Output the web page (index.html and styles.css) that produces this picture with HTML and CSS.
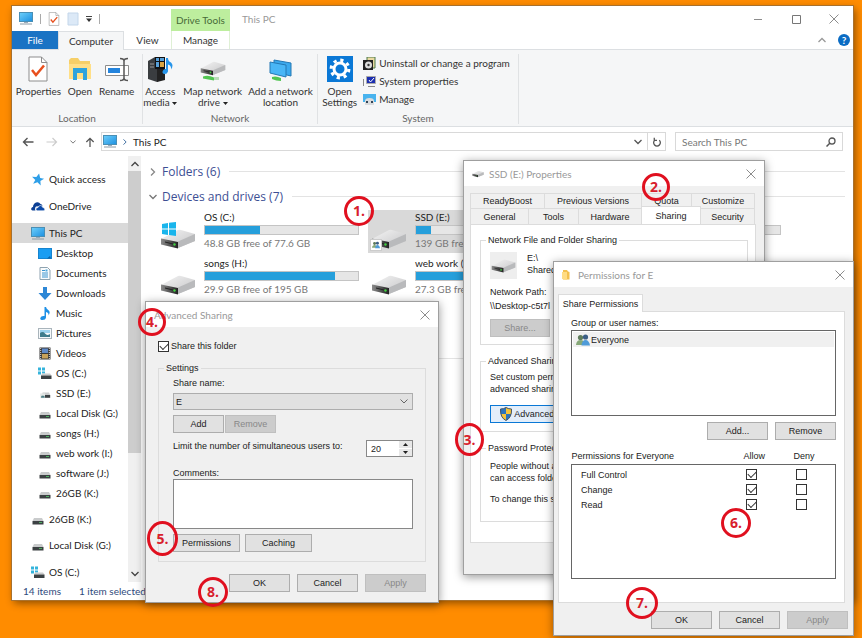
FILE: index.html
```html
<!DOCTYPE html>
<html lang="en">
<head>
<meta charset="utf-8">
<title>This PC</title>
<link rel="stylesheet" href="styles.css">
</head>
<body>
<svg class="defs" aria-hidden="true">
  <defs>
    <linearGradient id="screen" x1="0" y1="0" x2="1" y2="1"><stop offset="0" stop-color="#6fd0fb"/><stop offset="1" stop-color="#1c8fe0"/></linearGradient>
    <linearGradient id="metal" x1="0" y1="0" x2="1" y2="1"><stop offset="0" stop-color="#f4f4f4"/><stop offset="1" stop-color="#c4c4c6"/></linearGradient>
    <linearGradient id="front" x1="0" y1="0" x2="1" y2="0"><stop offset="0" stop-color="#8b8b8b"/><stop offset="1" stop-color="#222"/></linearGradient>
  </defs>
  <symbol id="pc" viewBox="0 0 14 13"><rect x=".5" y=".5" width="13" height="9" fill="url(#screen)" stroke="#4a8fb5"/><path d="M5 10h4v1H5z" fill="#9ab"/><path d="M1 12h12" stroke="#8a9aa5"/></symbol>
  <symbol id="drive" viewBox="0 0 36 20"><path d="M1 10 18 1q1-.5 3 0l14 4v7L18 19 1 15z" fill="url(#metal)"/><path d="M18 12.500 35 5v7L18 19z" fill="#b9babc"/><path d="M1 9.500 18 13v6.500L1 15.500z" fill="url(#front)"/><path d="M5 13l8 2" stroke="#222" stroke-width="1"/><circle cx="14.500" cy="15.500" r="1.200" fill="#3fd03f"/></symbol>
  <symbol id="mini-drive" viewBox="0 0 12 8"><path d="M2 1h8l1.500 3H.5z" fill="#c9cbcc"/><path d="M.5 4h11v3.500H.5z" fill="#3c4143"/><path d="M7 5.500h3" stroke="#4fae62"/></symbol>
  <symbol id="win" viewBox="0 0 14 14"><path d="M0 2 6 1v5.500H0zM7 .8 14 0v6.500H7zM0 7.500h6V13l-6-1zM7 7.500h7V14l-7-1z" fill="#19b5ec"/></symbol>
  <symbol id="os-drive" viewBox="0 0 14 12"><path d="M0 0h3v3H0zM4 0h3v3H4zM0 4h3v3H0zM4 4h3v2H4z" fill="#35b4dc"/><path d="M4 6h8l1.500 2H3z" fill="#c9cbcc"/><path d="M3 8h10.500v3.500H3z" fill="#3c4143"/></symbol>
  <symbol id="share-drive" viewBox="0 0 14 10"><path d="M4 2h8l1.500 3H3z" fill="#c9cbcc"/><path d="M3 5h10.500v3.500H3z" fill="#3c4143"/><rect x="1" y="3" width="6" height="6" fill="#e4e8e6"/><path d="M2 8.500q0-3 1.500-3t1.500 3zM4.500 8.500q0-3 1-3t1.200 3z" fill="#4d7f86"/></symbol>
  <symbol id="star" viewBox="0 0 12 12"><path d="m7 .5 1 4 3.600.8-3.400 2L8.500 11.500 5.500 8.500 1.500 10l2-3.500-3-3 4 .3z" fill="#2f9fe8"/></symbol>
  <symbol id="cloud" viewBox="0 0 14 9"><path d="M1.500 8.500Q-.5 8 .5 6q.5-1 1.500-1 0-3 3-4.500Q8-.5 9.500 2q1.500 0 2 2L5 4.500Q3.500 6 4.500 8.500z" fill="#0c3f94"/><path d="M6 8.800Q4.500 8.500 5 6.800 5.500 5.500 7 5.500 7.500 3.500 9.500 3.500t2.300 2q2 .2 2 1.800t-1.600 1.500z" fill="#0c4aa8" stroke="#fff" stroke-width=".6"/></symbol>
  <symbol id="desk" viewBox="0 0 14 11"><rect x=".5" y=".5" width="13" height="10" fill="#1a9df2" stroke="#1684cf"/><path d="M12 8 9 10.500h4z" fill="#0b63a8"/></symbol>
  <symbol id="doc" viewBox="0 0 12 13"><path d="M1 .5h7.500L11 3v9.500H1z" fill="#fafcfd" stroke="#8fa3b0"/><path d="M3 3.500h3M3 6h6M3 8h6M3 10h6" stroke="#3a94cf"/><path d="M6.500 2.500h2v2h-2z" fill="#4aa7dd"/></symbol>
  <symbol id="down" viewBox="0 0 13 13"><path d="M4.500 0h4v6H13l-6.500 7L0 6h4.500z" fill="#2d87d6"/></symbol>
  <symbol id="note" viewBox="0 0 11 13"><path d="M5 0h1.500q.3 2 2.500 3.300Q11.300 5 9 8.500q.5-3-2.500-3.500v5.500Q6 13 3 13 .5 13 .8 11 1.500 8.500 5 9z" fill="#1e90e6"/></symbol>
  <symbol id="pic" viewBox="0 0 14 11"><rect x=".5" y=".5" width="13" height="10" fill="#f5f8fa" stroke="#a9b4bb"/><path d="M2 2h10v3H2z" fill="#9bd2ee"/><path d="M2 5q3-2 5 .5T12 6v3H2z" fill="#3f7c8c"/></symbol>
  <symbol id="film" viewBox="0 0 12 13"><path d="M.5.500h11v12H.500z" fill="#383838"/><path d="M3 1.500h6v4.500H3z" fill="#5d89c8"/><path d="M3 7h6v4.500H3z" fill="#c6a15a"/><path d="M1.700 1v11M10.300 1v11" stroke="#ddd" stroke-width="1" stroke-dasharray="1 1"/></symbol>
  <symbol id="sheet-check" viewBox="0 0 20 26"><path d="M1 1h12.500L19 6.500V25H1z" fill="#fff" stroke="#8d8d8d"/><path d="M13.500 1v5.500H19" fill="none" stroke="#8d8d8d"/><path d="m4 14 4 5 8-9.500" fill="none" stroke="#e8501e" stroke-width="2.500"/></symbol>
  <symbol id="close" viewBox="0 0 10 10"><path d="m.5.500 9 9m0-9-9 9" fill="none" stroke="#8c8c8c"/></symbol>
  <symbol id="chev" viewBox="0 0 8 5"><path d="m.5.500 3.500 3.500L7.500.5" fill="none" stroke="currentColor" stroke-width="1.300"/></symbol>
  <symbol id="caret" viewBox="0 0 5 3"><path d="M0 0h5L2.500 3z" fill="#222"/></symbol>
  <symbol id="folder" viewBox="0 0 8 11"><path d="M1 1h4l1 1.500L7.500 3v7.500H1z" fill="#f3c04f"/><path d="M0 3h5v8l-5-1z" fill="#ffdc84"/></symbol>
  <symbol id="people" viewBox="0 0 14 12"><circle cx="4.500" cy="3.500" r="2.600" fill="#5f7c5b"/><path d="M0 11q.5-5 4.500-5T9 11z" fill="#86a878"/><circle cx="9.500" cy="3" r="2.600" fill="#3c5e85"/><path d="M5.500 11.500q.5-5.500 4-5.500T14 11.500z" fill="#4f9bd8"/></symbol>
</svg>

<main class="desktop">

  <section class="window explorer" aria-label="This PC">
    <header class="titlebar">
      <div class="quick">
        <svg class="i14"><use href="#pc"/></svg><span class="bar"></span>
        <svg class="i12"><use href="#sheet-check"/></svg>
        <svg class="i12" viewBox="0 0 12 14"><path d="M1 1h10v12H1z" fill="#dce9f7" stroke="#c3d6ea"/></svg>
        <svg class="i6" viewBox="0 0 6 6"><path d="M0 .5h6" stroke="#444"/><path d="M0 2.500h6L3 6z" fill="#333"/></svg><span class="bar"></span>
      </div>
      <span class="drive-tools">Drive Tools</span>
      <h1>This PC</h1>
      <div class="controls">
        <button aria-label="Minimize"><svg class="i10" viewBox="0 0 10 10"><path d="M1 5.500h8" stroke="#8c8c8c"/></svg></button>
        <button aria-label="Maximize"><svg class="i10" viewBox="0 0 10 10"><path d="M1.500 1.500h8v8h-8z" fill="none" stroke="#777"/></svg></button>
        <button aria-label="Close"><svg class="i10"><use href="#close"/></svg></button>
      </div>
    </header>
    <nav class="tabs">
      <button class="file">File</button>
      <button class="current">Computer</button>
      <button class="view">View</button>
      <button class="manage">Manage</button>
      <span class="help">
        <svg class="i8 up" color="#999"><use href="#chev"/></svg>
        <button aria-label="Help">?</button>
      </span>
    </nav>

    <div class="ribbon">
      <section class="group location">
        <div class="tools">
          <button><svg class="big" viewBox="-3 0 26 26"><use href="#sheet-check" width="20" height="26"/></svg>Properties</button>
          <button><svg class="big" viewBox="0 0 26 26"><path d="M2 4 4 2h7l2 3h10v18H2z" fill="#f6cf68"/><path d="M2 8h22v15H2z" fill="#ffdf87"/><path d="M6 24V12h14v12h-4v-7h-6v7z" fill="#2da3de"/></svg>Open</button>
          <button><svg class="big" viewBox="0 0 26 26"><path d="M1.500 9.500h23v10h-23z" fill="#fff" stroke="#8c8c8c"/><path d="M4 12h12v5H4z" fill="#2484dd"/><path d="M16 2.500q4 0 4 2.500v17q0 2.500-4 2.500M24 2.500q-4 0-4 2.500m4 19.500q-4 0-4-2.500" fill="none" stroke="#555" stroke-width="1.500"/></svg>Rename</button>
        </div>
        <h2>Location</h2>
      </section>
      <section class="group network">
        <div class="tools">
          <button><svg class="big" viewBox="0 0 26 26"><path d="M1 5 8 1h9v21l-7 4-9-3z" fill="#3a3d40"/><path d="M10 5h8v19l-8 2z" fill="#222"/><path d="M8 1h10v12H8z" fill="#111"/><path d="M9 2h3v3H9zM13 2h4v3h-4zM9 6h3v5H9z" fill="#58a0d8"/><path d="M13 6h4v5h-4z" fill="#d9a441"/><path d="M3 8h4m-4 3h4" stroke="#999"/><path d="M19 2h2q0 3 3 4.500 3 2.500 0 7 .5-4-3-5v7q-1 3-4 2.500-2.500-1-1-3.500Q17 12.500 19 13z" fill="#2795ea"/></svg>Access<br>media <svg class="caret"><use href="#caret"/></svg></button>
          <button><svg class="big" viewBox="0 0 26 26"><use href="#drive" y="5" width="26" height="15"/><path d="M3 20.500q5-2 11 1v3q-6-1-11-2z" fill="#52c552"/><path d="M14 21h5v3h-5z" fill="#b8dcb8"/></svg>Map network<br>drive <svg class="caret"><use href="#caret"/></svg></button>
          <button><svg class="big" viewBox="0 0 26 26"><path d="m7 4 17 3v13L7 16z" fill="#3ba9ee" stroke="#2478b4"/><path d="m3 6 16 3v12L3 17z" fill="#49b6f6" stroke="#2478b4"/><path d="M5 21q4-1.500 9 1v3q-5 0-9-2z" fill="#52c552"/></svg>Add a network<br>location</button>
        </div>
        <h2>Network</h2>
      </section>
      <section class="group system">
        <div class="tools">
          <button><svg class="big" viewBox="0 0 26 26"><path d="M0 0h26v26H0z" fill="#0a78d6"/><circle cx="13" cy="13" r="6" fill="none" stroke="#fff" stroke-width="3"/><circle cx="13" cy="13" r="8.800" fill="none" stroke="#fff" stroke-width="3.200" stroke-dasharray="3.200 3.710"/></svg>Open<br>Settings</button>
          <ul class="small-tools">
            <li><button><svg class="i13" viewBox="0 0 13 13"><path d="M4 0h8v11H4z" fill="#e9d9a0" stroke="#4c7a4c"/><path d="M0 3h10v10H0z" fill="#222"/><circle cx="5.500" cy="8" r="3.500" fill="#ddd"/><circle cx="5.500" cy="8" r="1.200" fill="#333"/></svg>Uninstall or change a program</button></li>
            <li><button><svg class="i13" viewBox="0 0 13 13"><path d="M3.500 1.500h9v7h-9z" fill="#1c2fb0" stroke="#aaa"/><path d="m6 5 1.500 2L11 3" fill="none" stroke="#fff"/><path d="M.5 4v7M5 11.500h7" stroke="#888"/></svg>System properties</button></li>
            <li><button><svg class="i13" viewBox="0 0 13 13"><path d="M0 1h13v8H0z" fill="#49b3ee"/><path d="M2 8q0-3 4.500-3T11 8v4H2z" fill="#d9dcde"/><path d="M3 8h2v2H3zM8 8h2v2H8z" fill="#345"/></svg>Manage</button></li>
          </ul>
        </div>
        <h2>System</h2>
      </section>
    </div>

    <div class="address-row">
      <button aria-label="Back"><svg class="i12" viewBox="0 0 12 10"><path d="M11.500 5H1.500M5.500 1l-4 4 4 4" fill="none" stroke="#555" stroke-width="1.400"/></svg></button>
      <button aria-label="Forward"><svg class="i12" viewBox="0 0 12 10"><path d="M.5 5h10M6.500 1l4 4-4 4" fill="none" stroke="#ccc" stroke-width="1.200"/></svg></button>
      <button aria-label="Recent" class="recent"><svg class="i6" color="#777"><use href="#chev"/></svg></button>
      <button aria-label="Up"><svg class="i10" viewBox="0 0 10 11"><path d="M5 11V1.500M1 5.500l4-4 4 4" fill="none" stroke="#555" stroke-width="1.400"/></svg></button>
      <div class="path">
        <svg class="i14"><use href="#pc"/></svg>
        <svg class="i6 right" color="#3f6fa0"><use href="#chev"/></svg>
        <span>This PC</span>
        <button class="drop" aria-label="Previous locations"><svg class="i8" color="#555"><use href="#chev"/></svg></button>
        <button class="refresh" aria-label="Refresh"><svg class="i10" viewBox="0 0 10 11"><path d="M2.500 3.500a3.700 3.700 0 1 0 5 0M2 .8v3h3" fill="none" stroke="#555" stroke-width="1.400"/></svg></button>
      </div>
      <label class="search"><input type="text" placeholder="Search This PC" aria-label="Search This PC"><svg class="i10" viewBox="0 0 10 10"><circle cx="6" cy="4" r="3" fill="none" stroke="#555" stroke-width="1.300"/><path d="M4 6 .5 9.500" stroke="#555" stroke-width="1.500"/></svg></label>
    </div>

    <div class="content">
      <nav class="tree">
        <a href="#"><svg><use href="#star"/></svg>Quick access</a>
        <a href="#"><svg><use href="#cloud"/></svg>OneDrive</a>
        <a href="#" class="picked"><svg><use href="#pc"/></svg>This PC</a>
        <a href="#" class="child"><svg><use href="#desk"/></svg>Desktop</a>
        <a href="#" class="child"><svg><use href="#doc"/></svg>Documents</a>
        <a href="#" class="child"><svg><use href="#down"/></svg>Downloads</a>
        <a href="#" class="child"><svg><use href="#note"/></svg>Music</a>
        <a href="#" class="child"><svg><use href="#pic"/></svg>Pictures</a>
        <a href="#" class="child"><svg><use href="#film"/></svg>Videos</a>
        <a href="#" class="child"><svg><use href="#os-drive"/></svg>OS (C:)</a>
        <a href="#" class="child disk"><svg><use href="#share-drive"/></svg>SSD (E:)</a>
        <a href="#" class="child disk"><svg><use href="#mini-drive"/></svg>Local Disk (G:)</a>
        <a href="#" class="child disk"><svg><use href="#mini-drive"/></svg>songs (H:)</a>
        <a href="#" class="child disk"><svg><use href="#mini-drive"/></svg>web work (I:)</a>
        <a href="#" class="child disk"><svg><use href="#mini-drive"/></svg>software (J:)</a>
        <a href="#" class="child disk"><svg><use href="#mini-drive"/></svg>26GB (K:)</a>
        <a href="#" class="disk"><svg><use href="#mini-drive"/></svg>26GB (K:)</a>
        <a href="#" class="disk"><svg><use href="#mini-drive"/></svg>Local Disk (G:)</a>
        <a href="#"><svg><use href="#os-drive"/></svg>OS (C:)</a>
      </nav>
      <div class="scroll">
        <svg class="i8 up"><use href="#chev"/></svg>
        <span class="thumb"></span>
        <svg class="i8"><use href="#chev"/></svg>
      </div>
      <div class="files">
        <h2><svg class="i8 right" color="#888"><use href="#chev"/></svg>Folders (6)</h2>
        <h2><svg class="i8" color="#777"><use href="#chev"/></svg>Devices and drives (7)</h2>
        <div class="drives">
          <article><div class="pic os"><svg class="flag"><use href="#win"/></svg><svg class="hd"><use href="#drive"/></svg></div><div class="info"><b>OS (C:)</b><i class="meter"><u style="width:36%"></u></i><small>48.8 GB free of 77.6 GB</small></div></article>
          <article class="picked"><div class="pic shared"><svg class="hd"><use href="#drive"/></svg><span class="tag"><svg><use href="#people"/></svg></span></div><div class="info"><b>SSD (E:)</b><i class="meter"><u style="width:10%"></u></i><small>139 GB free</small></div></article>
          <article><div class="pic"><svg class="hd"><use href="#drive"/></svg></div><div class="info"><b>Local Disk</b><i class="meter"><u style="width:40%"></u></i><small>&nbsp;</small></div></article>
          <article><div class="pic"><svg class="hd"><use href="#drive"/></svg></div><div class="info"><b>songs (H:)</b><i class="meter"><u style="width:85%"></u></i><small>29.9 GB free of 195 GB</small></div></article>
          <article><div class="pic"><svg class="hd"><use href="#drive"/></svg></div><div class="info"><b>web work (I:)</b><i class="meter"><u style="width:85%"></u></i><small>27.3 GB free</small></div></article>
        </div>
        <hr>
      </div>
    </div>
    <footer><span>14 items</span><span>1 item selected</span></footer>
  </section>

  <section class="window dialog properties" aria-label="SSD (E:) Properties">
    <header><svg class="prop-icon"><use href="#drive"/></svg><h1>SSD (E:) Properties</h1><button aria-label="Close"><svg class="i10"><use href="#close"/></svg></button></header>
    <div class="body">
      <div class="tab-row back"><button class="w75">ReadyBoost</button><button class="w97">Previous Versions</button><button class="w50">Quota</button><button class="w63">Customize</button></div>
      <div class="tab-row front"><button class="w59">General</button><button class="w50">Tools</button><button class="w63">Hardware</button><button class="w59 on">Sharing</button><button class="w54">Security</button></div>
      <div class="panel">
        <fieldset class="f1">
          <legend>Network File and Folder Sharing</legend>
          <div class="shared-item"><span><svg><use href="#drive"/></svg></span><p>E:\<br>Shared</p></div>
          <p class="net">Network Path:<br>\\Desktop-c5t7l</p>
          <button class="btn" disabled>Share...</button>
        </fieldset>
        <fieldset class="f2">
          <legend>Advanced Sharing</legend>
          <p>Set custom permissions,<br>advanced sharing</p>
          <button class="btn focus"><svg class="i12" viewBox="0 0 12 13"><path d="M6 0Q3.500 1.500.5 1.500 0 10 6 13q6-3 5.500-11.500Q8.500 1.500 6 0z" fill="#2c74bd"/><path d="M6 0q2.500 1.500 5.500 1.500.3 2.500-.4 5H6zM.9 6.500H6V13Q2 11 .9 6.500z" fill="#f5c43a"/><path d="M6 0Q3.500 1.500.5 1.500 0 10 6 13q6-3 5.500-11.500Q8.500 1.500 6 0z" fill="none" stroke="#456"/></svg>Advanced Sharing</button>
        </fieldset>
        <fieldset class="f3">
          <legend>Password Protection</legend>
          <p>People without a<br>can access folders</p>
          <p>To change this setting</p>
        </fieldset>
      </div>
    </div>
  </section>

  <section class="window dialog advanced" aria-label="Advanced Sharing">
    <header><h1>Advanced Sharing</h1><button aria-label="Close"><svg class="i10"><use href="#close"/></svg></button></header>
    <div class="body">
      <label class="tick"><input type="checkbox" checked>Share this folder</label>
      <fieldset>
        <legend>Settings</legend>
        <label for="share">Share name:</label>
        <select id="share"><option>E</option></select>
        <div class="pair"><button class="btn">Add</button><button class="btn" disabled>Remove</button></div>
        <div class="limit"><label for="users">Limit the number of simultaneous users to:</label>
          <span class="spin"><input id="users" type="text" value="20"><span><button aria-label="More"><svg class="caret up"><use href="#caret"/></svg></button><button aria-label="Fewer"><svg class="caret"><use href="#caret"/></svg></button></span></span></div>
        <label for="comments">Comments:</label>
        <textarea id="comments"></textarea>
        <div class="pair wide"><button class="btn">Permissions</button><button class="btn">Caching</button></div>
      </fieldset>
      <div class="actions"><button class="btn">OK</button><button class="btn">Cancel</button><button class="btn" disabled>Apply</button></div>
    </div>
  </section>

  <section class="window dialog permissions" aria-label="Permissions for E">
    <header><svg class="folder-icon"><use href="#folder"/></svg><h1>Permissions for E</h1><button aria-label="Close"><svg class="i10"><use href="#close"/></svg></button></header>
    <div class="body">
      <div class="tab-row"><button class="on">Share Permissions</button></div>
      <div class="panel">
        <p>Group or user names:</p>
        <ul class="names"><li><svg><use href="#people"/></svg>Everyone</li></ul>
        <div class="actions"><button class="btn">Add...</button><button class="btn">Remove</button></div>
        <table>
          <thead><tr><th>Permissions for Everyone</th><th>Allow</th><th>Deny</th></tr></thead>
          <tbody>
            <tr><td>Full Control</td><td><input type="checkbox" aria-label="Allow Full Control" checked></td><td><input type="checkbox" aria-label="Deny Full Control"></td></tr>
            <tr><td>Change</td><td><input type="checkbox" aria-label="Allow Change" checked></td><td><input type="checkbox" aria-label="Deny Change"></td></tr>
            <tr><td>Read</td><td><input type="checkbox" aria-label="Allow Read" checked></td><td><input type="checkbox" aria-label="Deny Read"></td></tr>
            <tr class="rest"><td colspan="3"></td></tr>
          </tbody>
        </table>
      </div>
      <div class="actions"><button class="btn">OK</button><button class="btn">Cancel</button><button class="btn" disabled>Apply</button></div>
    </div>
  </section>

  <span class="step s1">1.</span>
  <span class="step s2">2.</span>
  <span class="step s3">3.</span>
  <span class="step s4">4.</span>
  <span class="step s5">5.</span>
  <span class="step s6">6.</span>
  <span class="step s7">7.</span>
  <span class="step s8">8.</span>
</main>
</body>
</html>
```
FILE: styles.css
```css
:root {
  --ui: Lato, "Open Sans", sans-serif;
  --heading: "Open Sans", "Noto Sans", sans-serif;
  --classic: "Liberation Sans", Arial, sans-serif;
}
* { box-sizing: border-box; }
body { margin: 0; font: 10px/12px var(--ui); color: #333; }
h1, h2, p, ul { margin: 0; padding: 0; font-size: inherit; font-weight: inherit; }
ul { list-style: none; }
button, input, select, textarea { font: inherit; color: inherit; margin: 0; }
button { padding: 0; border: 0; background: none; white-space: nowrap; }
svg { display: block; flex: none; }
.defs { position: absolute; width: 0; height: 0; }
.i6 { width: 6px; height: 6px; }
.i8 { width: 8px; height: 6px; }
.i10 { width: 10px; height: 10px; }
.i12 { width: 12px; height: 14px; }
.i13 { width: 13px; height: 13px; }
.i14 { width: 14px; height: 13px; }
.caret { display: inline-block; width: 5px; height: 3px; vertical-align: middle; }
.up { transform: rotate(180deg); }
.right { transform: rotate(-90deg); }

.desktop { position: relative; min-height: 100vh; overflow: hidden; background: #ff8c00; }
.window { position: absolute; display: flex; flex-direction: column; background: #fff; }
.explorer { inset: 6px 9px 38px 12px; box-shadow: 0 0 0 1px #a8712e, 2px 3px 8px #0007; }

/* Explorer title bar and tabs */
.titlebar { display: flex; height: 25px; flex: none; align-items: center; color: #999; }
.quick { display: flex; width: 159px; align-items: center; gap: 7px; padding-left: 7px; }
.bar { width: 1px; height: 10px; background: #aaa; }
.drive-tools { width: 59px; align-self: stretch; margin-top: 3px; background: #bdee9e; color: #476b38; line-height: 22px; text-align: center; }
.titlebar h1 { margin-left: 12px; }
.controls { display: flex; gap: 28px; margin-left: auto; padding-right: 14px; }
.tabs { display: flex; height: 19px; flex: none; align-items: stretch; border-bottom: 1px solid #dcdfe2; }
.file { width: 46px; background: #1a73c4; color: #fff; }
.current { width: 66px; margin-bottom: -1px; background: #f5f6f7; border: 1px solid #dcdfe2; border-bottom: 0; }
.view { width: 47px; }
.manage { width: 59px; border: solid #dff0d5; border-width: 0 1px; }
.help { display: flex; align-items: center; gap: 12px; margin-left: auto; padding-right: 3px; }
.help button { width: 12px; height: 12px; border-radius: 50%; background: #0b6cc4; color: #fff; font-weight: 700; line-height: 12px; }

/* Ribbon */
.ribbon { display: flex; height: 77px; flex: none; padding: 4px 0 2px; background: #f5f6f7; border-bottom: 1px solid #dcdfe2; line-height: 11px; }
.group { display: flex; flex-direction: column; justify-content: space-between; border-right: 1px solid #e0e2e4; }
.group h2 { text-align: center; color: #666; }
.location { width: 131px; }
.network { width: 175px; }
.system { width: 201px; }
.tools { display: flex; justify-content: center; align-items: flex-start; gap: 6px; padding-right: 4px; }
.tools > button { display: block; }
.big { width: 26px; height: 26px; margin: 2px auto 4px; }
.small-tools { display: flex; flex-direction: column; gap: 5px; padding-top: 3px; }
.small-tools button { display: flex; align-items: center; gap: 3px; }

/* Address row */
.address-row { display: flex; height: 29px; flex: none; align-items: center; gap: 12px; padding: 0 10px; }
.address-row .recent { margin-right: -3px; }
.path { display: flex; flex: 1; height: 19px; align-items: center; gap: 5px; margin-left: -6px; padding-left: 1px; border: 1px solid #d9d9d9; color: #222; }
.path .drop { margin-left: auto; }
.refresh { display: grid; width: 18px; align-self: stretch; place-items: center; border-left: 1px solid #d9d9d9; }
.search { display: flex; width: 168px; height: 19px; align-items: center; margin-left: -3px; padding: 0 6px; border: 1px solid #d9d9d9; }
.search input { flex: 1; min-width: 0; border: 0; padding: 0; outline: 0; }
.search input::placeholder { color: #777; }

/* Explorer content */
.content { display: flex; flex: 1; min-height: 0; }
.tree { width: 116px; padding-top: 6px; overflow: hidden; }
.tree a { display: flex; height: 20px; align-items: center; gap: 4px; margin-top: 7px; padding-left: 19px; color: #222; text-decoration: none; white-space: nowrap; }
.tree a.disk { margin-top: 6px; }
.tree a.child { margin-top: 0; padding-left: 26px; }
.tree svg { width: 14px; height: 13px; }
.tree .disk svg { height: 8px; margin-top: 4px; }
.tree .picked { background: #d9d9d9; }
.scroll { display: flex; width: 13px; flex-direction: column; align-items: center; justify-content: space-between; padding: 5px 0; background: #f0f0f0; color: #444; }
.thumb { width: 13px; flex: 0 1 282px; margin: 4px 0 auto; background: #cdcdcd; }
.files { flex: 1; min-width: 0; padding: 3px 8px; }
.files h2 { display: flex; height: 25px; align-items: center; gap: 5px; font-family: var(--heading); font-size: 12px; color: #3d4f94; white-space: nowrap; }
.files h2::after { content: ""; flex: 1; height: 1px; margin-left: 4px; background: #e3e3e3; }
.drives { display: grid; grid-template-columns: repeat(3, 202px); gap: 3px 9px; margin-left: 8px; padding: 1px 0 59px; }
.drives article { display: flex; height: 43px; gap: 9px; }
.drives .picked { background: #d9d9d9; }
.pic { position: relative; display: flex; width: 38px; align-items: flex-end; padding: 0 0 4px 3px; }
.hd { width: 36px; height: 20px; }
.flag { position: absolute; left: 5px; top: 12px; width: 14px; height: 14px; }
.tag { position: absolute; left: 2px; bottom: 2px; padding: 1px; background: #fff; border: 1px solid #ccc; }
.tag svg { width: 8px; height: 8px; }
.info { display: flex; flex: 1; flex-direction: column; color: #222; white-space: nowrap; }
.info b { font-weight: 400; line-height: 15px; }
.info small { font-size: inherit; line-height: 16px; color: #777; }
.meter { display: block; height: 10px; background: #e6e6e6; border: 1px solid #c4c4c4; }
.meter u { display: block; height: 100%; background: #269fdb; }
.files hr { height: 1px; margin: 0; border: 0; background: #e3e3e3; }
.explorer footer { display: flex; height: 18px; flex: none; align-items: center; gap: 18px; padding-left: 11px; color: #2e4a7c; white-space: nowrap; }

/* Dialogs */
.dialog { border: 1px solid #9f9f9f; background: #f0f0f0; box-shadow: 0 2px 9px #0006; color: #222; }
.dialog header { display: flex; height: 25px; align-items: center; gap: 5px; padding: 0 8px; background: #fff; color: #999; }
.dialog header button { margin-left: auto; }
.dialog .body { font-family: var(--classic); font-size: 9px; }
.dialog fieldset { margin: 0; min-width: 0; border: 1px solid #dcdcdc; }
.dialog legend { padding: 0 2px; }
.btn { height: 18px; background: #e1e1e1; border: 1px solid #adadad; }
.btn:disabled { background: #ccc; border-color: #bfbfbf; color: #888; }
.actions { display: flex; justify-content: flex-end; gap: 7px; }
.actions .btn { width: 61px; }
input[type="checkbox"] { appearance: none; display: grid; width: 11px; height: 11px; margin: 0; border: 1px solid #333; background: #fff; }
input[type="checkbox"]:checked::after { content: ""; width: 7px; height: 4px; margin: 1px; border: solid #333; border-width: 0 0 1px 1px; transform: rotate(-45deg); }
.tab-row { display: flex; }
.tab-row button { height: 16px; background: #f0f0f0; border: 1px solid #dcdcdc; border-width: 1px 1px 0 0; }
.tab-row button:first-child { border-left-width: 1px; }
.tab-row .on { position: relative; height: 18px; margin: -2px 0 -1px; background: #fff; }
.panel { background: #fff; border: 1px solid #dcdcdc; }

.properties { left: 463px; top: 160px; width: 302px; }
.properties .body { padding: 7px 8px 31px 6px; }
.prop-icon { width: 12px; height: 8px; }
.back button { height: 15px; }
.w50 { width: 50px; } .w54 { width: 54px; } .w59 { width: 59px; }
.w63 { width: 63px; } .w75 { width: 75px; } .w97 { width: 97px; }
.properties .panel { display: flex; flex-direction: column; gap: 10px; padding: 9px 7px 20px 9px; }
.properties fieldset { padding: 0 9px; white-space: nowrap; overflow: hidden; }
.properties legend { margin-left: -4px; }
.f1 { height: 111px; }
.f2 { height: 77px; }
.f3 { height: 80px; }
.shared-item { display: flex; gap: 10px; padding-top: 6px; }
.shared-item span { display: grid; width: 27px; height: 27px; place-items: center; background: #eee; }
.shared-item svg { width: 25px; height: 16px; }
.net { padding: 6px 0; line-height: 14px; }
.properties .btn { width: 60px; }
.f2 p { padding: 4px 0 10px; }
.properties .focus { display: flex; width: 108px; align-items: center; justify-content: center; gap: 2px; border-color: #0a78d6; background: #e3eefa; }
.f3 p { padding: 6px 0 3px; }

.advanced { left: 145px; top: 301px; width: 294px; }
.advanced .body { padding: 13px 12px 10px; }
.tick { display: flex; align-items: center; gap: 2px; margin-bottom: 10px; }
.advanced fieldset { display: flex; flex-direction: column; padding: 3px 12px 9px 14px; }
.advanced legend { margin-left: -9px; }
.advanced select { height: 17px; margin: 4px 0 5px; padding: 0 2px; appearance: none; border: 1px solid #adadad; background: #e1e1e1 url("data:image/svg+xml,%3Csvg xmlns='http://www.w3.org/2000/svg' width='8' height='5'%3E%3Cpath d='M.5.500 4 4 7.500.5' fill='none' stroke='%23666'/%3E%3C/svg%3E") no-repeat right 4px center; }
.pair { display: flex; gap: 1px; }
.pair .btn { width: 51px; }
.limit { display: flex; justify-content: space-between; margin: 7px 0 10px; white-space: nowrap; }
.spin { display: flex; width: 47px; height: 17px; flex: none; border: 1px solid #888; background: #fff; }
.spin input { width: 32px; padding: 0 4px; border: 0; }
.spin span { display: flex; flex: 1; flex-direction: column; gap: 1px; }
.spin button { display: grid; flex: 1; place-items: center; background: #e8e8e8; }
.advanced textarea { height: 50px; padding: 0; border: 1px solid #888; background: #fff; resize: none; }
.wide { gap: 5px; margin-top: 5px; }
.wide .btn { width: 67px; }
.advanced .actions { margin-top: 12px; }

.permissions { left: 553px; top: 261px; width: 301px; }
.permissions .body { padding: 7px 5px 6px 4px; }
.folder-icon { width: 8px; height: 11px; margin-right: 3px; }
.permissions .tab-row .on { width: 85px; margin-top: 0; }
.permissions .panel { margin-right: 3px; padding: 5px 8px 23px 12px; }
.names { height: 86px; margin: 1px 0 6px; padding: 1px; border: 1px solid #666; }
.names li { display: flex; height: 15px; align-items: center; gap: 1px; padding-left: 3px; background: #f0f0f0; }
.names svg { width: 14px; height: 12px; }
.permissions table { width: 100%; margin-top: 8px; border-collapse: collapse; table-layout: fixed; }
.permissions th { height: 16px; padding: 0; font-weight: 400; text-align: left; }
.permissions th + th { width: 50px; }
.permissions th:last-child { width: 42px; }
.permissions tbody { border: 1px solid #666; }
.permissions td { height: 15px; padding: 0 0 0 9px; }
.permissions td + td { padding: 0 0 0 2px; }
.permissions tbody tr:first-child td { height: 18px; padding-top: 3px; }
.permissions tbody .rest td { height: 66px; }
.permissions .body > .actions { margin-top: 8px; }

/* Numbered markers */
.step { position: absolute; display: grid; width: 30px; height: 30px; place-items: center; border: 3px solid #e0101f; border-radius: 50%; color: #d8202c; font: 700 14px/16px var(--heading); }
.s1 { left: 344px; top: 196px; }
.s2 { left: 642px; top: 173px; width: 28px; height: 28px; }
.s3 { left: 455px; top: 423px; width: 29px; height: 33px; }
.s4 { left: 138px; top: 308px; width: 28px; height: 28px; }
.s5 { left: 147px; top: 521px; width: 31px; height: 35px; }
.s6 { left: 721px; top: 508px; }
.s7 { left: 626px; top: 587px; width: 32px; height: 32px; }
.s8 { left: 198px; top: 577px; }
```
